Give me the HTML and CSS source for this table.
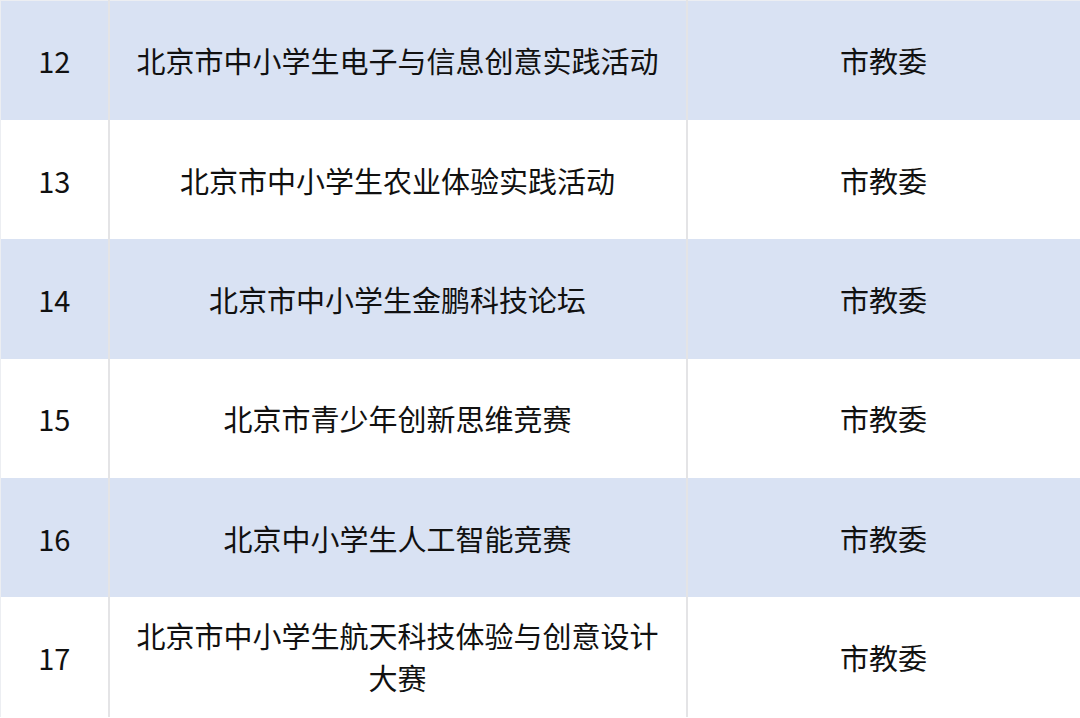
FILE: index.html
```html
<!DOCTYPE html>
<html lang="zh-CN">
<head>
<meta charset="utf-8">
<link rel="stylesheet" href="styles.css">
</head>
<body>
<table class="list">
  <colgroup>
    <col class="c-num">
    <col class="c-name">
    <col class="c-org">
  </colgroup>
  <tbody>
    <tr class="alt"><td>12</td><td>北京市中小学生电子与信息创意实践活动</td><td>市教委</td></tr>
    <tr><td>13</td><td>北京市中小学生农业体验实践活动</td><td>市教委</td></tr>
    <tr class="alt"><td>14</td><td>北京市中小学生金鹏科技论坛</td><td>市教委</td></tr>
    <tr><td>15</td><td>北京市青少年创新思维竞赛</td><td>市教委</td></tr>
    <tr class="alt"><td>16</td><td>北京中小学生人工智能竞赛</td><td>市教委</td></tr>
    <tr><td>17</td><td class="wrap">北京市中小学生航天科技体验与创意设计大赛</td><td>市教委</td></tr>
  </tbody>
</table>
</body>
</html>
```
FILE: styles.css
```css
html, body {
  margin: 0;
  padding: 0;
  background: #ffffff;
  overflow: hidden;
}
.list {
  width: 1080px;
  border-collapse: collapse;
  table-layout: fixed;
  border-top: 1px solid #eceef2;
  font-family: "Noto Sans CJK SC", "Noto Sans", sans-serif;
  font-size: 29px;
  color: #111111;
}
.c-num { width: 108px; }
.c-name { width: 578px; }
.c-org { width: 394px; }
.list tr { height: 119.4px; }
.list tr.alt { background: #d9e2f3; }
.list td {
  padding: 0 24px;
  text-align: center;
  vertical-align: middle;
  line-height: 42px;
  border-left: 2px solid #e4e4e6;
  border-right: 2px solid #e4e4e6;
}
.list td:first-child {
  padding: 0;
  border-left: 1px solid #eceef2;
}
.list td.wrap {
  padding: 0 22px;
  vertical-align: top;
  padding-top: 17px;
}
```
